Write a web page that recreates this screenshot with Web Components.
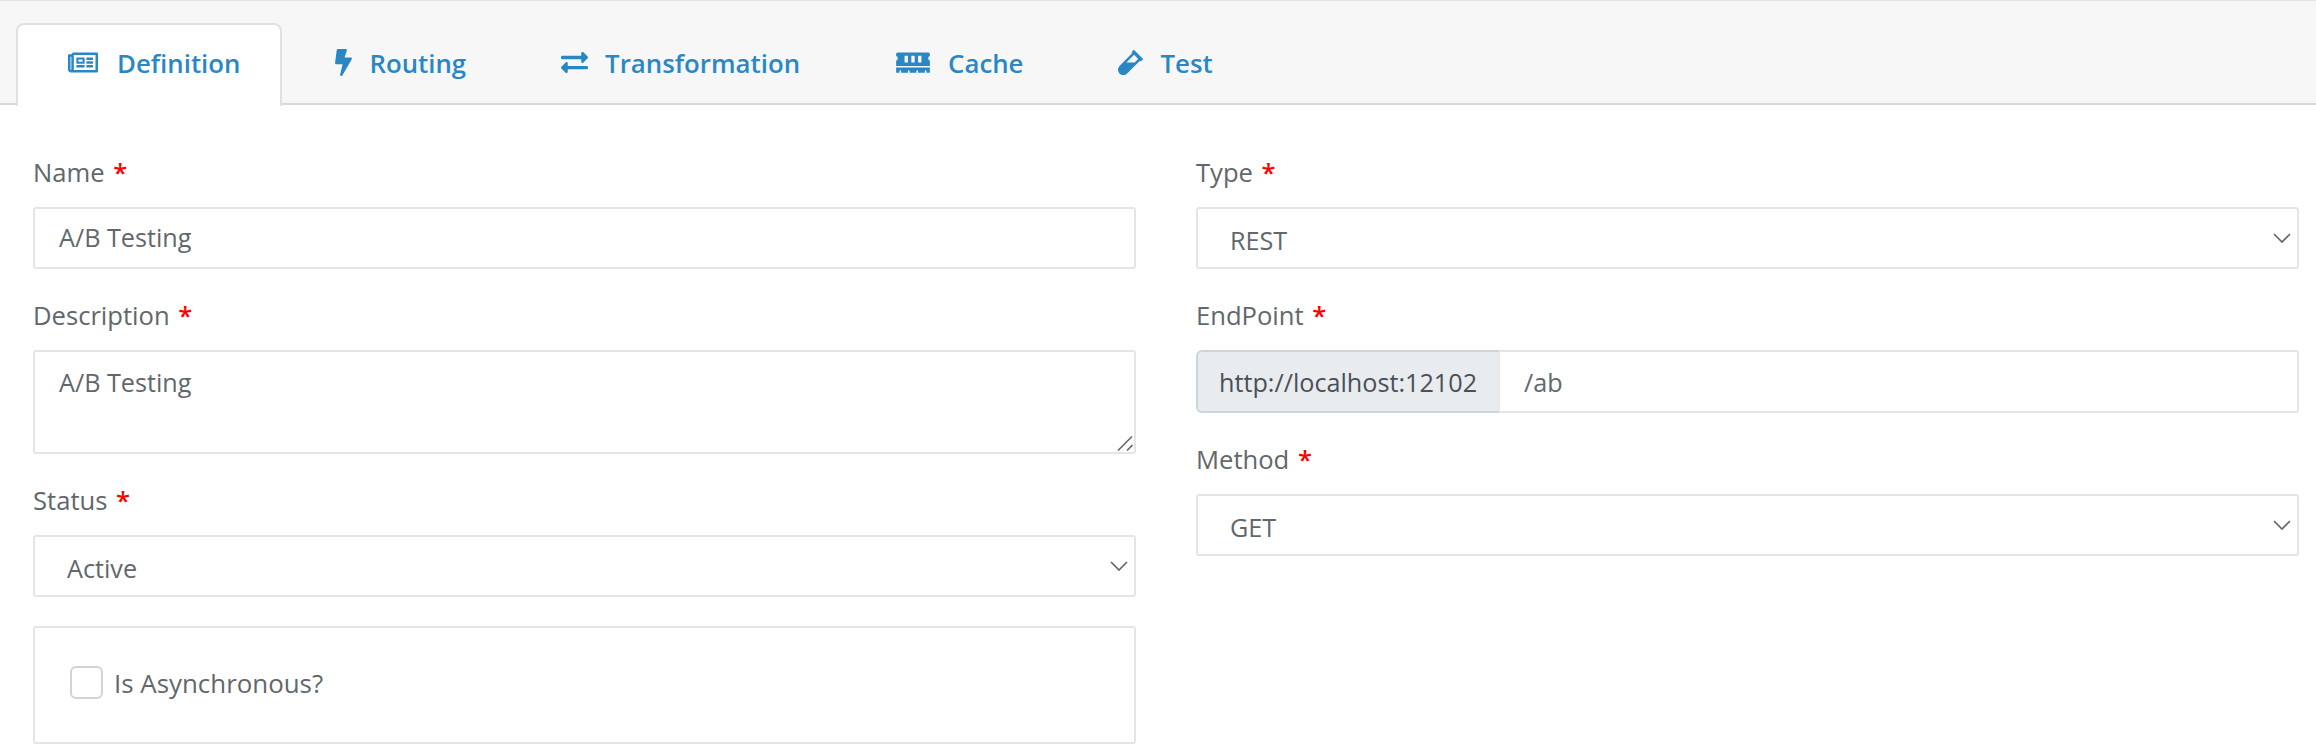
<!DOCTYPE html>
<html>
<head>
<meta charset="utf-8">
<title>Definition</title>
<style>
html, body { margin: 0; height: 100%; background: #fff; overflow: hidden; }
body { font-family: "Open Sans", "Liberation Sans", sans-serif; font-size: 25.6px; line-height: 36px; color: #62676c; }
</style>
</head>
<body>
<api-form>
    <tab-bar slot="tabs">
        <tab-item active><app-icon name="newspaper" slot="icon"></app-icon>Definition</tab-item>
        <tab-item><app-icon name="bolt" slot="icon"></app-icon>Routing</tab-item>
        <tab-item><app-icon name="exchange" slot="icon"></app-icon>Transformation</tab-item>
        <tab-item><app-icon name="memory" slot="icon"></app-icon>Cache</tab-item>
        <tab-item><app-icon name="vial" slot="icon"></app-icon>Test</tab-item>
    </tab-bar>
    <form-field slot="left" label="Name"><text-box>A/B Testing</text-box></form-field>
    <form-field slot="left" label="Description"><text-box multiline>A/B Testing</text-box></form-field>
    <form-field slot="left" label="Status"><select-box>Active</select-box></form-field>
    <check-panel slot="left">Is Asynchronous?</check-panel>
    <form-field slot="right" label="Type"><select-box>REST</select-box></form-field>
    <form-field slot="right" label="EndPoint"><input-group prefix="http://localhost:12102">/ab</input-group></form-field>
    <form-field slot="right" label="Method"><select-box>GET</select-box></form-field>
</api-form>

<script>
const iconos = {
    newspaper: { box: "0 0 576 512", w: 30, gap: 19, d: "M552 64H112c-20.858 0-38.643 13.377-45.248 32H24c-13.255 0-24 10.745-24 24v272c0 30.928 25.072 56 56 56h496c13.255 0 24-10.745 24-24V88c0-13.255-10.745-24-24-24zM48 392V144h16v248c0 4.411-3.589 8-8 8s-8-3.589-8-8zm480 8H111.422c.374-2.614.578-5.283.578-8V112h416v288zM172 280h136c6.627 0 12-5.373 12-12v-96c0-6.627-5.373-12-12-12H172c-6.627 0-12 5.373-12 12v96c0 6.627 5.373 12 12 12zm28-80h80v40h-80v-40zm-40 140v-24c0-6.627 5.373-12 12-12h136c6.627 0 12 5.373 12 12v24c0 6.627-5.373 12-12 12H172c-6.627 0-12-5.373-12-12zm192 0v-24c0-6.627 5.373-12 12-12h104c6.627 0 12 5.373 12 12v24c0 6.627-5.373 12-12 12H364c-6.627 0-12-5.373-12-12zm0-144v-24c0-6.627 5.373-12 12-12h104c6.627 0 12 5.373 12 12v24c0 6.627-5.373 12-12 12H364c-6.627 0-12-5.373-12-12zm0 72v-24c0-6.627 5.373-12 12-12h104c6.627 0 12 5.373 12 12v24c0 6.627-5.373 12-12 12H364c-6.627 0-12-5.373-12-12z" },
    bolt: { box: "0 0 320 512", w: 17, gap: 17, d: "M296 160H180.6l42.6-129.8C227.2 15 215.7 0 200 0H56C44 0 33.8 8.9 32.2 20.8l-32 240C-1.7 275.2 9.5 288 24 288h118.7L96.6 482.5c-3.6 15.2 8 29.5 23.3 29.5 8.4 0 16.4-4.4 20.8-12l176-304c9.3-15.9-2.2-36-20.7-36z" },
    exchange: { box: "0 0 512 512", w: 27, gap: 17, d: "M0 168v-16c0-13.255 10.745-24 24-24h360V80c0-21.367 25.899-32.042 40.971-16.971l80 80c9.372 9.373 9.372 24.569 0 33.941l-80 80C409.956 271.982 384 261.456 384 240v-48H24c-13.255 0-24-10.745-24-24zm488 152H128v-48c0-21.314-25.862-32.08-40.971-16.971l-80 80c-9.372 9.373-9.372 24.569 0 33.941l80 80C102.057 463.997 128 453.437 128 432v-48h360c13.255 0 24-10.745 24-24v-16c0-13.255-10.745-24-24-24z" },
    memory: { box: "0 0 640 512", w: 36, gap: 17, d: "M640 130.94V96c0-17.67-14.33-32-32-32H32C14.33 64 0 78.33 0 96v34.94c18.6 6.61 32 24.19 32 45.06s-13.4 38.45-32 45.06V320h640v-98.94c-18.6-6.61-32-24.19-32-45.06s13.4-38.45 32-45.06zM224 256h-64V128h64v128zm128 0h-64V128h64v128zm128 0h-64V128h64v128zM0 448h64v-26.67c0-8.84 7.16-16 16-16s16 7.16 16 16V448h128v-26.67c0-8.84 7.16-16 16-16s16 7.16 16 16V448h128v-26.67c0-8.84 7.16-16 16-16s16 7.16 16 16V448h128v-26.67c0-8.84 7.16-16 16-16s16 7.16 16 16V448h64v-96H0v96z" },
    vial: { box: "0 0 480 512", w: 25, gap: 17, d: "M477.7 186.1L309.5 18.3c-3.1-3.1-8.2-3.1-11.3 0l-34 33.9c-3.1 3.1-3.1 8.2 0 11.3l11.2 11.1L33 316.5c-38.8 38.7-45.1 102-9.4 143.5 20.6 24 49.5 36 78.4 35.9 26.4 0 52.8-10 72.9-30.1l246.3-245.7 11.2 11.1c3.1 3.1 8.2 3.1 11.3 0l34-33.9c3.1-3 3.1-8.1 0-11.2zM318 256H161l148-147.7 78.5 78.3L318 256z" }
};

class AppIcon extends HTMLElement {
    connectedCallback() {
        const ico = iconos[this.getAttribute("name")];
        this.attachShadow({ mode: "open" });
        this.shadowRoot.innerHTML = `
        <style>
        :host { display: block; width: ${ico.w}px; margin-right: ${ico.gap}px; }
        svg { display: block; width: 100%; height: 27px; fill: currentColor; }
        </style>
        <svg viewBox="${ico.box}"><path d="${ico.d}"></path></svg>`;
    }
}
customElements.define("app-icon", AppIcon);

class TabBar extends HTMLElement {
    constructor() {
        super();
        this.attachShadow({ mode: "open" });
        this.shadowRoot.innerHTML = `
        <style>
        :host {
            display: flex;
            gap: 1px;
            box-sizing: border-box;
            height: 105px;
            padding: 22px 0 0 16px;
            background: #f7f7f7;
            border-top: 1px solid #e2e2e2;
            border-bottom: 2px solid #d8d8d8;
        }
        </style>
        <slot></slot>`;
    }
}
customElements.define("tab-bar", TabBar);

class TabItem extends HTMLElement {
    constructor() {
        super();
        this.attachShadow({ mode: "open" });
        this.shadowRoot.innerHTML = `
        <style>
        :host {
            display: flex;
            align-items: center;
            box-sizing: border-box;
            height: 83px;
            padding: 0 40px 6px 50px;
            border: 2px solid transparent;
            border-bottom: 0;
            border-radius: 8px 8px 0 0;
            color: #2a87c6;
            font-size: 25.8px;
            font-weight: 600;
            white-space: nowrap;
        }
        :host([active]) {
            background: #fff;
            border-color: #dee2e6;
        }
        </style>
        <slot name="icon"></slot><slot></slot>`;
    }
}
customElements.define("tab-item", TabItem);

class ApiForm extends HTMLElement {
    constructor() {
        super();
        this.attachShadow({ mode: "open" });
        this.shadowRoot.innerHTML = `
        <style>
        :host { display: block; }
        .cols {
            display: grid;
            grid-template-columns: 1103px 1103px;
            column-gap: 60px;
            padding: 50px 0 0 33px;
        }
        .col { display: flex; flex-direction: column; gap: 29px; }
        </style>
        <slot name="tabs"></slot>
        <div class="cols">
            <div class="col"><slot name="left"></slot></div>
            <div class="col"><slot name="right"></slot></div>
        </div>`;
    }
}
customElements.define("api-form", ApiForm);

class FormField extends HTMLElement {
    constructor() {
        super();
        this.attachShadow({ mode: "open" });
        this.shadowRoot.innerHTML = `
        <style>
        :host { display: block; }
        label { display: block; height: 36px; margin-bottom: 16px; }
        span { color: #f00; margin-left: 2px; font-weight: 600; }
        </style>
        <label><span id="txt" style="color:inherit;margin:0;font-weight:400"></span> <span>*</span></label>
        <slot></slot>`;
    }
    connectedCallback() {
        this.shadowRoot.getElementById("txt").textContent = this.getAttribute("label");
    }
}
customElements.define("form-field", FormField);

class TextBox extends HTMLElement {
    constructor() {
        super();
        this.attachShadow({ mode: "open" });
        this.shadowRoot.innerHTML = `
        <style>
        :host {
            display: block;
            position: relative;
            box-sizing: border-box;
            height: 62px;
            padding: 10px 24px;
            font-size: 25.2px;
            background: #fff;
            border: 2px solid #e5e5e5;
            border-radius: 3px;
        }
        :host([multiline]) { height: 104px; padding-top: 12px; }
        svg { display: none; position: absolute; right: 1px; bottom: 1px; width: 16px; height: 16px; }
        :host([multiline]) svg { display: block; }
        </style>
        <slot></slot>
        <svg viewBox="0 0 16 16" fill="none" stroke="#666" stroke-width="1.6">
            <path d="M1 15.5L15 1.5M10 15.5L15.500 10"></path>
        </svg>`;
    }
}
customElements.define("text-box", TextBox);

class SelectBox extends HTMLElement {
    constructor() {
        super();
        this.attachShadow({ mode: "open" });
        this.shadowRoot.innerHTML = `
        <style>
        :host {
            display: flex;
            align-items: center;
            justify-content: space-between;
            box-sizing: border-box;
            height: 62px;
            padding: 3px 6px 0 32px;
            font-size: 25.2px;
            background: #fff;
            border: 2px solid #e5e5e5;
            border-radius: 3px;
        }
        svg { width: 18px; height: 10px; margin-top: -3px; }
        </style>
        <span><slot></slot></span>
        <svg viewBox="0 0 18 10" fill="none" stroke="#666" stroke-width="1.7"><path d="M1 1l8 8 8-8"></path></svg>`;
    }
}
customElements.define("select-box", SelectBox);

class InputGroup extends HTMLElement {
    constructor() {
        super();
        this.attachShadow({ mode: "open" });
        this.shadowRoot.innerHTML = `
        <style>
        :host { display: flex; height: 63px; box-sizing: border-box; font-size: 25.2px; }
        .pre {
            display: flex;
            align-items: center;
            box-sizing: border-box;
            width: 303px;
            padding: 0 0 0 21px;
            background: #e9ecef;
            border: 2px solid #ced4da;
            border-right: 0;
            border-radius: 6px 0 0 6px;
            color: #495057;
            white-space: nowrap;
        }
        .val {
            flex: 1;
            display: flex;
            align-items: center;
            padding: 0 24px;
            border: 2px solid #e5e5e5;
            border-left-width: 1px;
            border-radius: 0 3px 3px 0;
        }
        </style>
        <div class="pre" id="pre"></div>
        <div class="val"><slot></slot></div>`;
    }
    connectedCallback() {
        this.shadowRoot.getElementById("pre").textContent = this.getAttribute("prefix");
    }
}
customElements.define("input-group", InputGroup);

class CheckPanel extends HTMLElement {
    constructor() {
        super();
        this.attachShadow({ mode: "open" });
        this.shadowRoot.innerHTML = `
        <style>
        :host {
            display: flex;
            align-items: center;
            gap: 11px;
            box-sizing: border-box;
            height: 118px;
            padding: 0 0 5px 35px;
            font-size: 25.9px;
            border: 2px solid #e5e5e5;
            border-radius: 3px;
        }
        .box {
            box-sizing: border-box;
            width: 33px;
            height: 33px;
            background: #fff;
            border: 2px solid #ced4da;
            border-radius: 6px;
        }
        </style>
        <div class="box"></div>
        <span><slot></slot></span>`;
    }
}
customElements.define("check-panel", CheckPanel);
</script>
</body>
</html>
